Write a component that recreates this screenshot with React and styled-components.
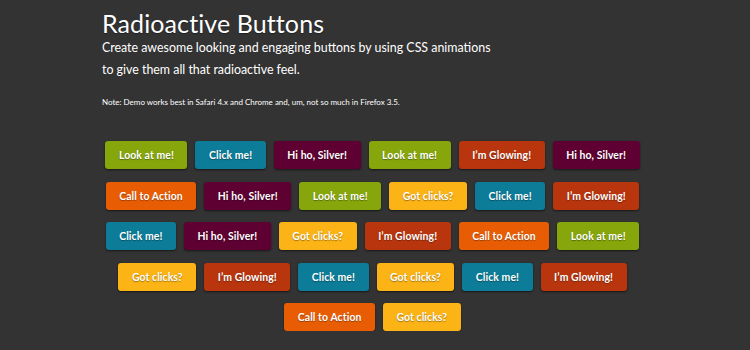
import React from 'react'
import styled, {createGlobalStyle} from 'styled-components'

const Global = createGlobalStyle`
body{margin:0;background:#333333;font-family:Lato,"Open Sans",sans-serif;color:#fff;}
`

const colors = {
        green:'#86a60c',
        blue:'#0c7c98',
        maroon:'#5e0032',
        orange:'#e85d04',
        rust:'#b9350e',
        yellow:'#fbb316',
}

const Page = styled.main`
width:545px;
margin:0 0 0 100px;
padding-top:7px;
`

const Title = styled.h1`
margin:0 0 0 2px;
font-size:25px;
font-weight:400;
line-height:32px;
letter-spacing:0.1px;
text-shadow:0 1px 1px rgba(0,0,0,.4);
`

const Lead = styled.p`
margin:-2px 0 0 2px;
width:400px;
font-size:12.4px;
line-height:21.5px;
`

const Note = styled.p`
margin:16px 0 0 2px;
font-size:8px;
line-height:12px;
`

const Grid = styled.div`
display:flex;
flex-direction:column;
gap:12.5px;
margin-top:33px;
`

const Row = styled.div`
display:flex;
justify-content:center;
gap:8px;
`

const Button = styled.a`
display:inline-flex;
align-items:center;
height:28px;
padding:0 13.5px;
border-radius:3px;
background:${p => colors[p.$tone]};
color:#fff;
font-size:10.4px;
font-weight:700;
letter-spacing:0.1px;
text-decoration:none;
text-shadow:0 1px 1px rgba(0,0,0,.35);
box-shadow:0 1px 2px rgba(0,0,0,.55);
white-space:nowrap;
`

const rows = [
        [['Look at me!','green'],['Click me!','blue'],['Hi ho, Silver!','maroon'],['Look at me!','green'],['I\u2019m Glowing!','rust'],['Hi ho, Silver!','maroon']],
        [['Call to Action','orange'],['Hi ho, Silver!','maroon'],['Look at me!','green'],['Got clicks?','yellow'],['Click me!','blue'],['I\u2019m Glowing!','rust']],
        [['Click me!','blue'],['Hi ho, Silver!','maroon'],['Got clicks?','yellow'],['I\u2019m Glowing!','rust'],['Call to Action','orange'],['Look at me!','green']],
        [['Got clicks?','yellow'],['I\u2019m Glowing!','rust'],['Click me!','blue'],['Got clicks?','yellow'],['Click me!','blue'],['I\u2019m Glowing!','rust']],
        [['Call to Action','orange'],['Got clicks?','yellow']],
]

export default function App() {
        return <>
                <Global/>
                <Page>
                        <Title>Radioactive Buttons</Title>
                        <Lead>Create awesome looking and engaging buttons by using CSS animations to give them all that radioactive feel.</Lead>
                        <Note>Note: Demo works best in Safari 4.x and Chrome and, um, not so much in Firefox 3.5.</Note>
                        <Grid>
                                {rows.map((row, r) => <Row key={r}>
                                        {row.map(([label, tone], i) => <Button key={i} href="#" $tone={tone}>{label}</Button>)}
                                </Row>)}
                        </Grid>
                </Page>
        </>
}
